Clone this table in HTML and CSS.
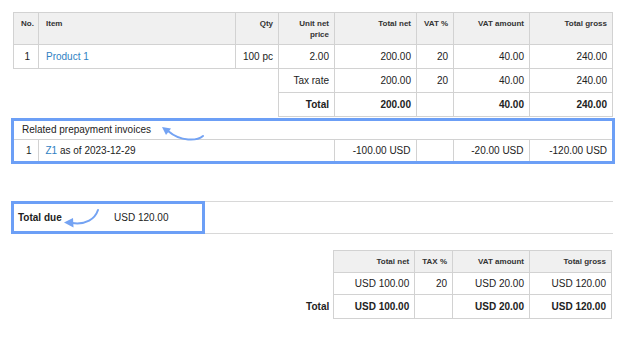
FILE: index.html
```html
<!DOCTYPE html>
<html lang="en">
<head>
  <meta charset="UTF-8">
  <title>Invoice summary</title>
  <link rel="stylesheet" href="styles.css">
</head>
<body>
  <div class="page">

    <table class="items">
      <colgroup>
        <col class="w-no"><col class="w-item"><col class="w-qty"><col class="w-unit">
        <col class="w-net"><col class="w-vat"><col class="w-vatamt"><col class="w-gross">
      </colgroup>
      <tr>
        <th class="left">No.</th>
        <th class="left">Item</th>
        <th>Qty</th>
        <th class="wrap">Unit net price</th>
        <th>Total net</th>
        <th>VAT %</th>
        <th>VAT amount</th>
        <th>Total gross</th>
      </tr>
      <tr>
        <td class="no">1</td>
        <td class="left"><a href="#">Product 1</a></td>
        <td>100 pc</td>
        <td>2.00</td>
        <td>200.00</td>
        <td>20</td>
        <td>40.00</td>
        <td>240.00</td>
      </tr>
      <tr>
        <td class="blank" colspan="3"></td>
        <td>Tax rate</td>
        <td>200.00</td>
        <td>20</td>
        <td>40.00</td>
        <td>240.00</td>
      </tr>
      <tr class="strong">
        <td class="blank" colspan="3"></td>
        <td>Total</td>
        <td>200.00</td>
        <td></td>
        <td>40.00</td>
        <td>240.00</td>
      </tr>
    </table>

    <!-- highlighted block -->
    <div class="related">
      <table class="related-table">
        <colgroup>
          <col class="r-no"><col class="r-desc"><col class="w-net"><col class="w-vat"><col class="w-vatamt"><col class="w-gross">
        </colgroup>
        <tr>
          <td class="caption" colspan="6">Related prepayment invoices</td>
        </tr>
        <tr>
          <td class="no">1</td>
          <td class="left"><a href="#">Z1</a> as of 2023-12-29</td>
          <td>-100.00 USD</td>
          <td></td>
          <td>-20.00 USD</td>
          <td>-120.00 USD</td>
        </tr>
      </table>
    </div>

    <div class="due">
      <div class="due-box">
        <span class="due-label">Total due</span>
        <span>USD 120.00</span>
      </div>
    </div>

    <table class="summary">
      <colgroup>
        <col class="s-label"><col class="s-net"><col class="s-tax"><col class="s-vat"><col class="s-gross">
      </colgroup>
      <tr>
        <th class="blank"></th>
        <th>Total net</th>
        <th>TAX %</th>
        <th>VAT amount</th>
        <th>Total gross</th>
      </tr>
      <tr>
        <td class="blank"></td>
        <td>USD 100.00</td>
        <td>20</td>
        <td>USD 20.00</td>
        <td>USD 120.00</td>
      </tr>
      <tr class="strong">
        <td class="blank label">Total</td>
        <td>USD 100.00</td>
        <td></td>
        <td>USD 20.00</td>
        <td>USD 120.00</td>
      </tr>
    </table>

    <!-- annotation arrows -->
    <svg class="arrows" width="622" height="337" viewBox="0 0 622 337">
      <path d="M203 136 C197 141 181 142 168 131" />
      <polygon points="162,127 171,128.5 166,135" />
      <path d="M98 210 C95 219 86 225 72 223" />
      <polygon points="64,222.5 73,218 73.5,227.5" />
    </svg>
  </div>
</body>
</html>
```

FILE: styles.css
```css
body {
  margin: 0;
  font-family: "Liberation Sans", Arial, sans-serif;
  font-size: 10px;
  color: #222;
  background: #fff;
}

.page {
  position: relative;
  width: 600px;
  padding: 12px 9px 0 13px;
}

a {
  color: #2f7fc3;
  text-decoration: none;
}

table {
  border-collapse: collapse;
  table-layout: fixed;
}

th, td {
  border: 1px solid #d2d2d2;
  padding: 5px 5px 5px 7px;
  text-align: right;
  line-height: 13px;
  white-space: nowrap;
}

th {
  background: #f0f0f0;
  font-size: 8px;
  font-weight: bold;
  line-height: 11px;
  padding: 5px 5px 4px 7px;
  vertical-align: top;
  color: #333;
}

th.wrap { white-space: normal; }

.left { text-align: left; }
.no { padding-right: 8px; }
.strong td { font-weight: bold; }

td.blank, th.blank {
  border: none;
  background: none;
}

.items { width: 600px; }

.w-no { width: 25px; }
.w-item { width: 197px; }
.w-qty { width: 43px; }
.w-unit { width: 56px; }
.w-net { width: 82px; }
.w-vat { width: 37px; }
.w-vatamt { width: 76px; }
.w-gross { width: 83px; }

/* highlighted prepayment block */
.related {
  margin: 1px 0 0 -2px;
  width: 598px;
  border: 3px solid #6c9ff6;
}

.related-table { width: 598px; }
.r-no { width: 24px; }
.r-desc { width: 296px; }

.related-table td {
  padding-top: 4px;
  padding-bottom: 4px;
}

.related-table td.no { padding-right: 6px; }

.related-table tr:first-child td { border-top: none; }
.related-table tr:last-child td { border-bottom: none; }
.related-table td:first-child { border-left: none; }
.related-table td:last-child { border-right: none; }

.related-table td.caption {
  text-align: left;
  padding: 2px 8px 3px 8px;
  border-right: none;
}

/* total due */
.due {
  display: flex;
  margin-top: 37px;
  height: 31px;
  border-top: 1px solid #d8d8d8;
  border-bottom: 1px solid #d8d8d8;
}

.due-box {
  display: flex;
  align-items: center;
  width: 184px;
  margin: -1px 0 -1px -2px;
  padding-left: 4px;
  border: 3px solid #6c9ff6;
}

.due-label {
  width: 96px;
  font-weight: bold;
}

/* summary */
.summary {
  margin: 16px 1px 0 auto;
}

.summary th { padding-bottom: 5px; }
.summary td { padding-top: 4px; padding-bottom: 4px; }
.summary .strong td { padding-top: 5px; padding-bottom: 5px; }
.s-label { width: 38px; }
.s-net { width: 81px; }
.s-tax { width: 37px; }
.s-vat { width: 77px; }
.s-gross { width: 82px; }
.summary .label { padding-right: 4px; }

.arrows {
  position: absolute;
  top: 0;
  left: 0;
  pointer-events: none;
}

.arrows path {
  fill: none;
  stroke: #74a3f3;
  stroke-width: 2;
  stroke-linecap: round;
}

.arrows polygon {
  fill: #74a3f3;
}
```
